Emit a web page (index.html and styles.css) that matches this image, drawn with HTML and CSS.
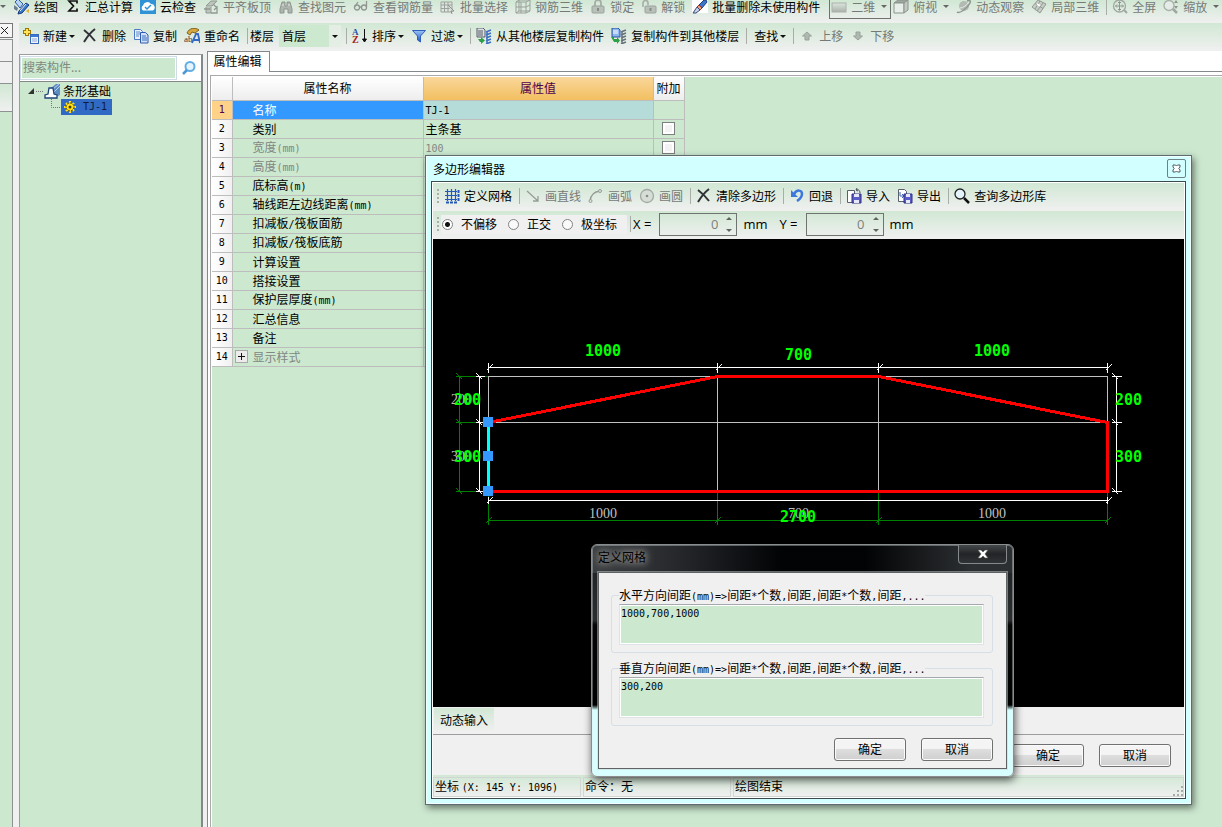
FILE: index.html
```html
<!DOCTYPE html>
<html lang="zh-CN">
<head>
<meta charset="utf-8">
<title>多边形编辑器</title>
<link rel="stylesheet" href="styles.css">
</head>
<body>
<svg class="defs" aria-hidden="true">
  <defs>
    <linearGradient id="gBlue" x1="0" y1="0" x2="0" y2="1"><stop offset="0" stop-color="#9cc4f5"/><stop offset="1" stop-color="#1f55c4"/></linearGradient>
    <linearGradient id="gGray" x1="0" y1="0" x2="0" y2="1"><stop offset="0" stop-color="#dde6de"/><stop offset="1" stop-color="#a9b1aa"/></linearGradient>
  </defs>
  <symbol id="draw" viewBox="0 0 16 16"><path d="M1 3l3-3 5 5-3 4z" fill="#b9d3f2" stroke="#2a5aa8"/><path d="M5 12l7-8 3 2-7 8-4 1z" fill="#3c78d0" stroke="#143a78"/><path d="M6 12l6-7" stroke="#e8f2ff"/><path d="M0 6l4 3-1 3-3-2z" fill="#6b7d95"/><path d="M12 12l3-2v4z" fill="#e0b030"/></symbol>
  <symbol id="sigma" viewBox="0 0 16 16"><path d="M12 4.500V2H4l4.500 5L4 12h8V9.500" fill="none" stroke="#111" stroke-width="1.700"/></symbol>
  <symbol id="cloud" viewBox="0 0 16 16"><rect width="16" height="15" fill="#2f93d6"/><path d="M3 11.500a3 3 0 0 1 0-5A4.500 4.500 0 0 1 11 5a3.500 3.500 0 0 1 2 6.500z" fill="#fff"/><path d="M5 8l2 2 4-4" fill="none" stroke="#2f93d6" stroke-width="1.500"/></symbol>
  <symbol id="align" viewBox="0 0 16 16"><path d="M3 7l5-5h6l-5 5zM3 8v6h5V8" fill="#bcc4bd" stroke="#909891"/><path d="M8 14h6V8l-3 3M1 10h6M10 5l4 4" fill="none" stroke="#909891" stroke-width="1.300"/></symbol>
  <symbol id="binoc" viewBox="0 0 16 16"><path d="M4 3h3v4h2V3h3l2 7v4h-4v-4H6v4H2v-4z" fill="#aeb5af" stroke="#8e958f"/><path d="M4 6h2M10 6h2" stroke="#e5eae6"/></symbol>
  <symbol id="glasses" viewBox="0 0 16 16"><g fill="none" stroke="#8f9690" stroke-width="1.300"><circle cx="4" cy="8.500" r="2.500"/><circle cx="11" cy="8.500" r="2.500"/><path d="M6.500 8h2M1.500 8L5 3M13.500 8V2"/></g></symbol>
  <symbol id="batch" viewBox="0 0 16 16"><path d="M1 3h11v10H1zM1 6h11M1 9.500h11M4.500 3v10M8 3v10" fill="#dfe6e0" stroke="#9ba29c"/><path d="M8 6l6 6-3 0 1 3" fill="#d5dcd6" stroke="#8c938d"/></symbol>
  <symbol id="grid3d" viewBox="0 0 16 16"><path d="M1 3h10v11H1zM4 1h11v11M11 3l4-2M11 14l4-2M1 3l3-2v11l-3 2M4 12h11M1 8h10l4-2M6 3v11" fill="none" stroke="#9aa19b"/></symbol>
  <symbol id="lock" viewBox="0 0 16 16"><path d="M5 7V4a3 3 0 0 1 6 0v3" fill="none" stroke="#a6ada7" stroke-width="1.800"/><rect x="2" y="7" width="12" height="7" rx="1" fill="#b9c0ba" stroke="#9aa19b"/><path d="M8 9v3" stroke="#858c86" stroke-width="2"/></symbol>
  <symbol id="unlock" viewBox="0 0 16 16"><path d="M2 8V4a2.500 2.500 0 0 1 5 0v2" fill="none" stroke="#a6ada7" stroke-width="1.600"/><rect x="4" y="7" width="11" height="7" rx="1" fill="#b9c0ba" stroke="#9aa19b"/><path d="M9.500 9v3" stroke="#858c86" stroke-width="2"/></symbol>
  <symbol id="brush" viewBox="0 0 16 16"><rect width="16" height="14" fill="#fff"/><path d="M7 6l5-5h2l1 2-5 6z" fill="#3c75c8" stroke="#1c3f85"/><path d="M7 6l3 3-2 2-3-3z" fill="#f0a080" stroke="#a03020"/><path d="M5 8l3 3-4 3H1z" fill="#c8d4e8" stroke="#384a78"/></symbol>
  <symbol id="flat" viewBox="0 0 16 16"><rect x="1" y="4" width="14" height="9" fill="url(#gGray)" stroke="#aab1ab"/></symbol>
  <symbol id="cube" viewBox="0 0 16 16"><path d="M1 4l4-3h10l-4 3z" fill="#a0a7a1" stroke="#8c938d"/><path d="M1 4h10v10H1z" fill="#e8eee9" stroke="#8c938d"/><path d="M11 4l4-3v10l-4 3z" fill="#c2c9c3" stroke="#8c938d"/></symbol>
  <symbol id="orbit" viewBox="0 0 16 16"><circle cx="8" cy="7" r="5" fill="#b3bab4"/><path d="M1 13c2 2 10-3 13-9 1-3-1-3-3-2" fill="none" stroke="#8d948e" stroke-width="1.500"/><path d="M4 9c3 0 7-3 8-5" stroke="#e4e9e5" fill="none"/></symbol>
  <symbol id="part3d" viewBox="0 0 16 16"><path d="M1 8l6-7 8 4-6 9z" fill="#c7cec8" stroke="#929993"/><path d="M4 4.500l8 5M9 2L4 10M12 4l-6 8" stroke="#929993"/><path d="M6 5l3 2" stroke="#fff" stroke-width="2"/></symbol>
  <symbol id="full" viewBox="0 0 16 16"><circle cx="7.500" cy="7" r="6" fill="none" stroke="#a0a7a1" stroke-width="1.300"/><path d="M7.500 3v8M3.500 7h8M6 4l1.500-1.500L9 4M6 10l1.500 1.500L9 10M5 5.500L3.500 7 5 8.500M10 5.500L11.500 7 10 8.500" fill="none" stroke="#8f9690"/><path d="M12 11l3 3" stroke="#a0a7a1" stroke-width="2"/></symbol>
  <symbol id="zoomic" viewBox="0 0 16 16"><circle cx="6" cy="6.500" r="5" fill="#e5ebe6" stroke="#a8afa9" stroke-width="1.300"/><path d="M10 10l4 4" stroke="#a0a7a1" stroke-width="2.500"/><path d="M13 1l2 3h-4zM13 10l2-3h-4z" fill="#8f9690"/></symbol>
  <symbol id="new" viewBox="0 0 16 16"><path d="M4 0v8M0 4h8" stroke="#a07800" stroke-width="4"/><path d="M4 1v6M1 4h6" stroke="#ffe45c" stroke-width="2"/><rect x="7.500" y="6.500" width="8" height="9" fill="#eef4fd" stroke="#3a68b8"/><path d="M8 8h7" stroke="#3a78d8" stroke-width="2"/><path d="M9 11h5M9 13h5" stroke="#8aa8d8"/></symbol>
  <symbol id="del" viewBox="0 0 16 16"><path d="M2 2c4 3 8 7 11 11M13 1C9 4 5 9 2 14" fill="none" stroke="#303238" stroke-width="2"/></symbol>
  <symbol id="copy" viewBox="0 0 16 16"><path d="M1.500 1.500h6l2 2v8h-8z" fill="#e8f1fd" stroke="#4d7ac4"/><path d="M3 4h4M3 6h4M3 8h3" stroke="#5d88cc"/><path d="M7.500 4.500h5l2.500 2.500v8H7.500z" fill="#cfe0f8" stroke="#2d5bb0"/><path d="M9 8h4M9 10h5M9 12h5" stroke="#3d6cc0"/></symbol>
  <symbol id="rename" viewBox="0 0 16 16"><path d="M3 5c2-5 8-6 12-3l-4 3-3-1-2 3z" fill="#d8a840" stroke="#80601c"/><text x="0" y="14" class="ic-a">ab</text><path d="M8 15l4-9h2l2 9M10 12h5" fill="none" stroke="#3567c4" stroke-width="1.800"/></symbol>
  <symbol id="sort" viewBox="0 0 16 16"><text x="0" y="7" class="ic-az">A</text><text x="0" y="15" class="ic-z">Z</text><path d="M12.500 1v12M10.500 11l2 3 2-3z" fill="#111" stroke="#111"/></symbol>
  <symbol id="filter" viewBox="0 0 16 16"><path d="M1.500 2.500h13L9.500 8v6l-3-2V8z" fill="url(#gBlue)" stroke="#2f5dbd"/></symbol>
  <symbol id="fromfl" viewBox="0 0 16 16"><path d="M1 0h6l2 2v7H1z" fill="#dde0e4" stroke="#555c66"/><path d="M2 3h5M2 5h5M2 7h5" stroke="#555c66"/><path d="M10 4l5-2M10 7l5-2M10 10l5-2M10 13l5-2M10 16l5-2M11 3v12" stroke="#3b6fc0" stroke-width="1.500" fill="none"/><path d="M2 11h3V9l4 3.500L5 16v-2H4z" fill="#2fa04a"/></symbol>
  <symbol id="tofl" viewBox="0 0 16 16"><path d="M1 0h6l2 2v7H1z" fill="#8fb6ee" stroke="#2450a0"/><path d="M2 3h5M2 5h5" stroke="#fff"/><path d="M10 4l5-2M10 7l5-2M10 10l5-2M10 13l5-2M10 16l5-2M11 3v12" stroke="#66717c" stroke-width="1.500" fill="none"/><path d="M0 9h3v2h3V9l3 3.500L6 16v-2H3z" fill="#2fa04a"/></symbol>
  <symbol id="up" viewBox="0 0 16 16"><path d="M8 4l4.500 4H10v4H6V8H3.500z" fill="#aeb8b0" stroke="#98a29a"/></symbol>
  <symbol id="down" viewBox="0 0 16 16"><path d="M8 12L3.500 8H6V4h4v4h2.500z" fill="#aeb8b0" stroke="#98a29a"/></symbol>
  <symbol id="search" viewBox="0 0 16 16"><circle cx="9" cy="6.500" r="4.500" fill="#e6f4fe" stroke="#62aee4" stroke-width="2"/><path d="M6 10l-4 4" stroke="#4a98d8" stroke-width="2.500"/></symbol>
  <symbol id="strip" viewBox="0 0 16 16"><path d="M7 5l5-4h4v11l-4 2z" fill="#5d8cc4"/><path d="M9 6l6-5M10 9l6-6" stroke="#b4d0ee"/><path d="M1 15v-3l3-1 1-6h4l1 6 3 1v3z" fill="#fff" stroke="#1c4378" stroke-width="1.300"/></symbol>
  <symbol id="gear" viewBox="0 0 16 16"><path d="M8 2v12M2 8h12M4 4l8 8M12 4l-8 8" stroke="#ffe01a" stroke-width="2.200"/><circle cx="8" cy="8" r="4" fill="#ffe01a" stroke="#4a3c00" stroke-dasharray="2 1"/><circle cx="8" cy="8" r="1.500" fill="#4a3c00"/></symbol>
  <symbol id="mesh" viewBox="0 0 16 16"><path d="M3.500 1v12M7.500 1v12M11.500 1v12M1 3.500h12M1 7.500h12M1 11.500h12" stroke="#2458b8" stroke-width="1.200"/><path d="M2 14.500h11M14.500 2v11" stroke="#2458b8" stroke-width="2" stroke-dasharray="3 1"/></symbol>
  <symbol id="line" viewBox="0 0 16 16"><path d="M2 3l11 10M13 8v5H8" fill="none" stroke="#969d97" stroke-width="1.300"/></symbol>
  <symbol id="arc" viewBox="0 0 16 16"><path d="M2 13Q3 4 12 3" fill="none" stroke="#969d97" stroke-width="1.300"/><circle cx="2.500" cy="13" r="1.500" fill="#dfe6e0" stroke="#969d97"/><circle cx="12" cy="3" r="1.500" fill="#dfe6e0" stroke="#969d97"/></symbol>
  <symbol id="circle" viewBox="0 0 16 16"><circle cx="8" cy="8" r="6.500" fill="#d5ddd6" stroke="#a2a9a3" stroke-width="1.300"/><circle cx="8" cy="8" r="1.300" fill="#858c86"/></symbol>
  <symbol id="undo" viewBox="0 0 16 16"><path d="M5 6c3-5 8-4 8 0 0 3-2 5-5 7" fill="none" stroke="#3d78dc" stroke-width="2.500"/><path d="M2 2v7h7z" fill="#3d78dc"/></symbol>
  <symbol id="import" viewBox="0 0 16 16"><path d="M1.500 2.500h7v12h-7z" fill="#fff" stroke="#56606e"/><path d="M6 6h9v9H6z" fill="#5a5cc8" stroke="#2c2e80"/><path d="M8 6h5v3H8zM8 12h5v3H8z" fill="#e8e8fa"/><path d="M14 5c0-3-2-4-4-3l1-2M10 2l2 1" fill="none" stroke="#4a505c"/></symbol>
  <symbol id="export" viewBox="0 0 16 16"><path d="M1.500 1.500h6l2 2v10h-8z" fill="#fff" stroke="#56606e"/><path d="M3 4v4h4M5 6l2 2-2 2" fill="none" stroke="#3c62b0"/><path d="M7 6h8v9H7z" fill="#5a5cc8" stroke="#2c2e80"/><path d="M9 6h4v3H9zM9 12h4v3H9z" fill="#e8e8fa"/></symbol>
  <symbol id="query" viewBox="0 0 16 16"><circle cx="6" cy="6" r="5" fill="#e4f3fc" stroke="#222" stroke-width="1.300"/><path d="M10 10l5 5" stroke="#111" stroke-width="2.500"/></symbol>
</svg>

<div class="app">
  <div class="bar bar-top">
    <span class="caret gray"></span>
    <button class="tb first"><svg class="ic"><use href="#draw"/></svg>绘图</button>
    <button class="tb"><svg class="ic"><use href="#sigma"/></svg>汇总计算</button>
    <button class="tb"><svg class="ic"><use href="#cloud"/></svg>云检查</button>
    <button class="tb off"><svg class="ic"><use href="#align"/></svg>平齐板顶</button>
    <button class="tb off"><svg class="ic"><use href="#binoc"/></svg>查找图元</button>
    <button class="tb off"><svg class="ic"><use href="#glasses"/></svg>查看钢筋量</button>
    <button class="tb off"><svg class="ic"><use href="#batch"/></svg>批量选择</button>
    <button class="tb off"><svg class="ic"><use href="#grid3d"/></svg>钢筋三维</button>
    <button class="tb off"><svg class="ic"><use href="#lock"/></svg>锁定</button>
    <button class="tb off"><svg class="ic"><use href="#unlock"/></svg>解锁</button>
    <button class="tb"><svg class="ic"><use href="#brush"/></svg>批量删除未使用构件</button>
    <button class="tb off boxed"><svg class="ic"><use href="#flat"/></svg>二维<span class="caret gray"></span></button>
    <button class="tb off"><svg class="ic"><use href="#cube"/></svg>俯视<span class="caret gray"></span></button>
    <button class="tb off"><svg class="ic"><use href="#orbit"/></svg>动态观察</button>
    <button class="tb off"><svg class="ic"><use href="#part3d"/></svg>局部三维</button>
    <span class="sep"></span>
    <button class="tb off"><svg class="ic"><use href="#full"/></svg>全屏</button>
    <button class="tb off"><svg class="ic"><use href="#zoomic"/></svg>缩放<span class="caret gray"></span></button>
  </div>

  <div class="body">
    <div class="rail">
      <button class="rail-x" aria-label="关闭"><svg viewBox="0 0 9 9"><path d="M1 1l7 7M8 1l-7 7" stroke="#222"/></svg></button>
      <div class="rail-cell"></div>
      <div class="rail-cell"></div>
      <div class="rail-cell tint"></div>
      <div class="rail-fill"></div>
    </div>
    <div class="main">
      <div class="bar bar-second">
        <button class="tb"><svg class="ic"><use href="#new"/></svg>新建<span class="caret near"></span></button>
        <button class="tb"><svg class="ic"><use href="#del"/></svg>删除</button>
        <button class="tb"><svg class="ic"><use href="#copy"/></svg>复制</button>
        <button class="tb"><svg class="ic"><use href="#rename"/></svg>重命名</button>
        <span class="sep tight"></span>
        <label class="floor-label" for="floor">楼层</label>
        <span class="combo"><select id="floor"><option>首层</option></select><span class="combo-btn"><span class="caret"></span></span></span>
        <span class="sep"></span>
        <button class="tb"><svg class="ic"><use href="#sort"/></svg>排序<span class="caret near"></span></button>
        <button class="tb"><svg class="ic"><use href="#filter"/></svg>过滤<span class="caret near"></span></button>
        <span class="sep"></span>
        <button class="tb"><svg class="ic"><use href="#fromfl"/></svg>从其他楼层复制构件</button>
        <button class="tb"><svg class="ic"><use href="#tofl"/></svg>复制构件到其他楼层</button>
        <span class="sep"></span>
        <button class="tb plain">查找<span class="caret near"></span></button>
        <span class="sep"></span>
        <button class="tb off"><svg class="ic"><use href="#up"/></svg>上移</button>
        <button class="tb off"><svg class="ic"><use href="#down"/></svg>下移</button>
      </div>

      <div class="panes">
        <div class="left">
          <div class="search">
            <input type="text" placeholder="搜索构件..." aria-label="搜索构件">
            <button aria-label="搜索"><svg class="ic"><use href="#search"/></svg></button>
          </div>
          <div class="tree">
            <div class="node"><svg class="twist" viewBox="0 0 20 14"><path d="M10 4v6H4z" fill="#333"/><path d="M12 7.500h8" stroke="#777" stroke-dasharray="1 1"/></svg><svg class="ic"><use href="#strip"/></svg><span class="node-name">条形基础</span></div>
            <div class="node child"><svg class="elbow" viewBox="0 0 10 16"><path d="M.5 0v8.500H10" fill="none" stroke="#777" stroke-dasharray="1 1"/></svg><span class="picked"><svg class="ic"><use href="#gear"/></svg><span class="lat">TJ-1</span></span></div>
          </div>
        </div>

        <div class="right">
          <div class="tabs"><button class="tab">属性编辑</button><span class="tabline"></span></div>
          <div class="sheet">
            <table>
              <colgroup><col class="c-no"><col class="c-name"><col class="c-val"><col class="c-add"></colgroup>
              <thead><tr><th></th><th>属性名称</th><th class="hot">属性值</th><th>附加</th></tr></thead>
              <tbody>
                <tr class="sel"><th>1</th><td>名称</td><td><span class="lat">TJ-1</span></td><td></td></tr>
                <tr><th>2</th><td>类别</td><td>主条基</td><td class="chk"><input type="checkbox" aria-label="附加 类别"></td></tr>
                <tr class="dim"><th>3</th><td>宽度<span class="lat">(mm)</span></td><td><span class="lat">100</span></td><td class="chk"><input type="checkbox" aria-label="附加 宽度"></td></tr>
                <tr class="dim"><th>4</th><td>高度<span class="lat">(mm)</span></td><td></td><td></td></tr>
                <tr><th>5</th><td>底标高<span class="lat">(m)</span></td><td></td><td></td></tr>
                <tr><th>6</th><td>轴线距左边线距离<span class="lat">(mm)</span></td><td></td><td></td></tr>
                <tr><th>7</th><td>扣减板<span class="lat">/</span>筏板面筋</td><td></td><td></td></tr>
                <tr><th>8</th><td>扣减板<span class="lat">/</span>筏板底筋</td><td></td><td></td></tr>
                <tr><th>9</th><td>计算设置</td><td></td><td></td></tr>
                <tr><th>10</th><td>搭接设置</td><td></td><td></td></tr>
                <tr><th>11</th><td>保护层厚度<span class="lat">(mm)</span></td><td></td><td></td></tr>
                <tr><th>12</th><td>汇总信息</td><td></td><td></td></tr>
                <tr><th>13</th><td>备注</td><td></td><td></td></tr>
                <tr class="dim"><th>14</th><td class="exp"><button class="plus" aria-label="展开"><svg viewBox="0 0 9 9"><path d="M4.500 1v7M1 4.500h7" stroke="#111"/></svg></button>显示样式</td><td></td><td></td></tr>
              </tbody>
            </table>
          </div>
        </div>
      </div>
    </div>
  </div>

  <section class="win" aria-label="多边形编辑器">
    <header class="win-title"><span>多边形编辑器</span><button class="win-x" aria-label="关闭"><svg viewBox="0 0 9 9"><path d="M1 1h2.500l1 1 1-1H8v2l-1.200 1.500L8 6v2H5.500l-1-1-1 1H1V6l1.200-1.500L1 3z" fill="#fff" stroke="#4a5a60"/></svg></button></header>
    <div class="client">
      <div class="bar strip">
        <span class="grip"></span>
        <button class="tb"><svg class="ic"><use href="#mesh"/></svg>定义网格</button>
        <span class="sep"></span>
        <button class="tb off"><svg class="ic"><use href="#line"/></svg>画直线</button>
        <button class="tb off"><svg class="ic"><use href="#arc"/></svg>画弧</button>
        <button class="tb off"><svg class="ic"><use href="#circle"/></svg>画圆</button>
        <span class="sep"></span>
        <button class="tb"><svg class="ic"><use href="#del"/></svg>清除多边形</button>
        <span class="sep"></span>
        <button class="tb"><svg class="ic"><use href="#undo"/></svg>回退</button>
        <span class="sep"></span>
        <button class="tb"><svg class="ic"><use href="#import"/></svg>导入</button>
        <button class="tb"><svg class="ic"><use href="#export"/></svg>导出</button>
        <span class="sep"></span>
        <button class="tb"><svg class="ic"><use href="#query"/></svg>查询多边形库</button>
      </div>
      <div class="bar strip">
        <span class="grip"></span>
        <div class="modes">
          <label><input type="radio" name="mode" checked>不偏移</label>
          <label><input type="radio" name="mode">正交</label>
          <label><input type="radio" name="mode">极坐标</label>
        </div>
        <span class="sep tight"></span>
        <label class="axis" for="dx">X =</label>
        <span class="spin"><input id="dx" type="text" value="0" disabled><span class="spin-btns"><button class="su" aria-label="增加 X"></button><button class="sd" aria-label="减少 X"></button></span></span>
        <span class="axis unit">mm</span>
        <label class="axis" for="dy">Y =</label>
        <span class="spin"><input id="dy" type="text" value="0" disabled><span class="spin-btns"><button class="su" aria-label="增加 Y"></button><button class="sd" aria-label="减少 Y"></button></span></span>
        <span class="axis unit">mm</span>
      </div>
      <div class="canvas">
        <svg viewBox="433 239 751 468" preserveAspectRatio="xMidYMid meet" role="img" aria-label="条形基础截面">
          <g transform="translate(.5 .5)" fill="none">
            <g stroke="#008000">
              <path d="M459 376v115M455 376h33M455 422h20M455 491h20M488 520h619M488 491v33M717 491v33M878 491v33M1107 491v33"/>
              <path d="M456 373l6 6M456 419l6 6M456 488l6 6M485 523l6-6M714 523l6-6M875 523l6-6M1104 523l6-6"/>
            </g>
            <path d="M488 376h619v115H488zM488 422h619M717 376v115M878 376v115" stroke="#c0c0c0"/>
            <g stroke="#fff">
              <path d="M488 367h619M488 362v10M717 362v10M878 362v10M1107 362v10M479 376v115M475 376h9M475 422h9M475 491h9M488 500h619M488 496v7M1107 496v7M1116 376v115M1111 376h10M1111 422h10M1111 491h10"/>
              <path d="M486 370l6-6M715 370l6-6M876 370l6-6M1105 370l6-6M476 373l6 6M476 419l6 6M476 488l6 6M486 503l6-6M1105 503l6-6M1112 373l6 6M1112 419l6 6M1112 488l6 6"/>
            </g>
            <path d="M488 422L717 376H878L1107 422V491H488" stroke="#f00" stroke-width="3"/>
            <path d="M488 422v69" stroke="#0ff" stroke-width="3"/>
          </g>
          <g class="dim-s"><text x="451" y="404">200</text><text x="451" y="461">300</text><text x="589" y="518">1000</text><text x="788" y="518">700</text><text x="978" y="518">1000</text></g>
          <g class="dim-l"><text x="585" y="356">1000</text><text x="785" y="360">700</text><text x="974" y="356">1000</text><text x="454" y="405">200</text><text x="454" y="462">300</text><text x="1115" y="405">200</text><text x="1115" y="462">300</text><text x="780" y="522">2700</text></g>
          <g fill="#39f"><path d="M483 417h10v10h-10zM483 451h10v10h-10zM483 486h10v10h-10z"/></g>
        </svg>
      </div>
      <div class="dyn"><button>动态输入</button></div>
      <div class="actions"><button class="push">确定</button><button class="push">取消</button></div>
      <footer class="status">
        <span>坐标 <span class="lat">(X: 145 Y: 1096)</span></span>
        <span>命令：无</span>
        <span>绘图结束</span>
        <svg class="sizer" viewBox="0 0 12 12"><path d="M9 1h2v2H9zM5 5h2v2H5zM9 5h2v2H9zM1 9h2v2H1zM5 9h2v2H5zM9 9h2v2H9z" fill="#a8aca8"/></svg>
      </footer>
    </div>
  </section>

  <section class="dlg" aria-label="定义网格">
    <header class="dlg-title"><span>定义网格</span><button class="dlg-x" aria-label="关闭"><svg viewBox="0 0 12 10"><path d="M1 1h3l2 2 2-2h3L8 5l3 4H8L6 7 4 9H1l3-4z" fill="#fff" stroke="#555" stroke-width=".6"/></svg></button></header>
    <div class="dlg-body">
      <fieldset>
        <legend><label for="hs">水平方向间距<span class="lat">(mm)=&gt;</span>间距<span class="lat">*</span>个数<span class="lat">,</span>间距<span class="lat">,</span>间距<span class="lat">*</span>个数<span class="lat">,</span>间距<span class="lat">,...</span></label></legend>
        <textarea id="hs">1000,700,1000</textarea>
      </fieldset>
      <fieldset>
        <legend><label for="vs">垂直方向间距<span class="lat">(mm)=&gt;</span>间距<span class="lat">*</span>个数<span class="lat">,</span>间距<span class="lat">,</span>间距<span class="lat">*</span>个数<span class="lat">,</span>间距<span class="lat">,...</span></label></legend>
        <textarea id="vs">300,200</textarea>
      </fieldset>
      <div class="dlg-actions"><button class="push">确定</button><button class="push">取消</button></div>
    </div>
  </section>
</div>
</body>
</html>
```

FILE: styles.css
```css
* { box-sizing: border-box; }

body {
  margin: 0;
  background: #cce8cf;
  color: #000;
  font: 12px/16px "Noto Sans CJK SC", sans-serif;
}

button, input, select, textarea {
  margin: 0;
  padding: 0;
  border: 0;
  background: none;
  color: inherit;
  font: inherit;
}

.defs { position: absolute; width: 0; height: 0; }
.ic-a { font: 9px "Liberation Serif", serif; fill: #333; }
.ic-az { font: bold 9px "Liberation Serif", serif; fill: #2d4fa8; }
.ic-z { font: bold 10px "Liberation Serif", serif; fill: #a82020; }

.lat { font: 10px/16px "DejaVu Sans Mono", monospace; white-space: pre; }
.ic { width: 16px; height: 16px; flex: none; }

.app {
  position: relative;
  display: flex;
  flex-direction: column;
  min-height: 100vh;
  overflow: hidden;
}

/* Toolbars */
.bar {
  display: flex;
  align-items: center;
  white-space: nowrap;
  background: linear-gradient(#d1e8d4, #f0f0f0);
}
.bar-top { height: 23px; padding-bottom: 10px; }
.bar-second { height: 28px; padding: 0 0 2px 4px; }

.tb {
  display: flex;
  align-items: center;
  flex: none;
  gap: 4px;
  margin-right: 7px;
}
.tb.first { margin-left: 8px; }
.tb.off { color: #767a77; }
.tb.plain { margin-left: 2px; }
.tb.boxed {
  height: 24px;
  margin: 0 2px 0 2px;
  padding: 0 3px 0 1px;
  border: 1px solid #6e726f;
}

.caret {
  width: 0;
  height: 0;
  flex: none;
  border: 3px solid transparent;
  border-top-color: #111;
  border-bottom: 0;
}
.tb .caret { margin-left: 2px; }
.tb .caret.near { margin-left: -2px; }
.caret.gray { border-top-color: #666; }

.sep {
  flex: none;
  width: 1px;
  height: 16px;
  margin-right: 5px;
  background: #a9aca9;
}
.sep.tight { margin-right: 2px; }
.floor-label { margin-right: 5px; }

.combo {
  display: flex;
  width: 62px;
  height: 22px;
  margin-right: 5px;
  background: #cce8cf;
}
.combo select { flex: 1; min-width: 0; padding-left: 3px; appearance: none; }
.combo-btn {
  display: flex;
  align-items: center;
  justify-content: center;
  width: 12px;
  background: #e4eee5;
}

/* Collapsed panel rail */
.body { display: flex; flex: 1; background: #f0f0f0; }
.rail { display: flex; flex-direction: column; width: 13px; margin-right: 6px; }
.rail-x {
  height: 15px;
  margin-bottom: 1px;
  border: 1px solid #777;
  border-left: 0;
  background: #f6f6f6;
}
.rail-x svg { display: block; width: 9px; height: 9px; }
.rail-cell {
  height: 22px;
  border: solid #8e9290;
  border-width: 1px 1px 0 0;
}
.rail-cell.tint { height: 28px; background: linear-gradient(#d1e8d4, #f0f0f0); }
.rail-fill {
  flex: 1;
  border: solid #8e9290;
  border-width: 1px 1px 0 0;
  background: #cce8cf;
}

.main { display: flex; flex: 1; flex-direction: column; min-width: 0; }
.panes { display: flex; flex: 1; }

/* Component tree */
.left {
  display: flex;
  flex-direction: column;
  width: 184px;
  margin-top: 3px;
  margin-right: 4px;
  border: 1px solid #9a9d9b;
  border-right: 2px solid #85888a;
  border-bottom: 0;
}
.search { display: flex; align-items: center; height: 26px; background: #fff; }
.search input {
  width: 157px;
  height: 24px;
  padding: 0 0 4px 2px;
  border: 1px solid #cfdbe6;
  background: #cce8cf;
  box-shadow: inset 0 0 0 1px #fff;
}
.search input::placeholder { color: #7d8a7f; opacity: 1; }
.search button { display: flex; margin-left: 4px; }
.tree {
  flex: 1;
  padding-top: 1px;
  border-top: 1px solid #85888a;
  background: #cce8cf;
}
.node { display: flex; align-items: center; height: 16px; padding-left: 4px; }
.twist { width: 20px; height: 14px; }
.node-name { margin-left: 3px; }
.child { padding-left: 31px; }
.elbow { width: 10px; height: 16px; }
.picked {
  display: flex;
  align-items: center;
  height: 16px;
  gap: 5px;
  padding: 0 5px 0 1px;
  background: #316ac5;
  color: #fff;
}
.picked .lat { color: #0c1c38; }

/* Property sheet */
.right {
  display: flex;
  flex: 1;
  flex-direction: column;
  min-width: 0;
  border-left: 1px solid #85888a;
  background: #fff;
}
.tabs { display: flex; height: 21px; margin-bottom: 3px; }
.tab {
  width: 62px;
  padding: 0 2px 2px 0;
  border: solid #85888a;
  border-width: 1px 1px 0 0;
}
.tabline { flex: 1; border-bottom: 1px solid #85888a; }
.sheet {
  flex: 1;
  margin-left: 2px;
  padding: 1px 0 0 1px;
  border: solid #a9a9ab;
  border-width: 1px 0 0 1px;
  background: #cce8cf;
  background-clip: content-box;
}
table { border-collapse: collapse; table-layout: fixed; width: 472px; }
.c-no { width: 20px; }
.c-name { width: 191px; }
.c-val { width: 230px; }
.c-add { width: 31px; }
th, td {
  height: 19px;
  padding: 0;
  border: solid #bdbdbd;
  border-width: 0 1px 1px 0;
  font-weight: normal;
  line-height: 16px;
  white-space: nowrap;
}
thead th { height: 23px; background: linear-gradient(#fff, #ededee); }
thead th.hot { background: linear-gradient(#f9d69a, #f2bf60); color: #50004c; }
tbody th {
  background: linear-gradient(90deg, #fff, #f0f0f0);
  font: 10px/16px "DejaVu Sans Mono", monospace;
}
td { padding-left: 2px; text-align: left; }
td:nth-child(2) { padding-left: 20px; }
.dim td { color: #828783; }
.sel th { background: #ffd28a; color: #50004c; }
.sel td:nth-child(3) { background: #b5dcd9; }
.sel td:nth-child(2) { background: #39f; color: #fff; }
.chk { padding: 0; }
.chk input {
  display: block;
  width: 13px;
  height: 13px;
  margin: 0 auto;
  appearance: none;
  border: 1px solid #7d807e;
  background: #f3f3f3;
  box-shadow: inset 0 0 0 2px #fff;
}
td.exp:nth-child(2) { padding-left: 2px; }
.plus {
  width: 13px;
  height: 13px;
  margin: 1px 5px 0 0;
  border: 1px solid #a9a9a9;
  background: #ececec;
  vertical-align: top;
}
.plus svg { display: block; width: 9px; height: 9px; margin: 0 auto; }

/* Polygon editor window */
.win {
  position: absolute;
  top: 155px;
  right: 30px;
  bottom: 22px;
  left: 425px;
  display: flex;
  flex-direction: column;
  padding: 0 5px 5px;
  border: 1px solid #5d6c70;
  background: #d2ffff;
  box-shadow: inset 0 0 0 1px #f2ffff, 2px 3px 7px rgba(0, 0, 0, .5);
}
.win-title {
  display: flex;
  align-items: center;
  justify-content: space-between;
  height: 25px;
  padding-left: 2px;
}
.win-x {
  display: flex;
  align-items: center;
  justify-content: center;
  width: 19px;
  height: 19px;
  border: 1px solid #6c8086;
  border-radius: 2px;
}
.win-x svg { width: 9px; height: 9px; }
.client {
  display: flex;
  flex: 1;
  flex-direction: column;
  min-height: 0;
  padding: 1px;
  border: 1px solid #3c494d;
  background: #f0f0f0;
  box-shadow: inset 0 0 0 1px #fff;
}
.strip { height: 28px; padding-bottom: 2px; }
.grip {
  width: 2px;
  height: 14px;
  margin: 0 5px 0 4px;
  background: repeating-linear-gradient(#a9b0aa 0 2px, transparent 2px 4px);
}
.modes {
  display: flex;
  align-items: center;
  height: 19px;
  gap: 11px;
  margin: 0 3px 0 -3px;
  padding-right: 10px;
  background: #f0f0f0;
}
.modes label { display: flex; align-items: center; gap: 8px; }
.modes input {
  width: 11px;
  height: 11px;
  appearance: none;
  border: 1px solid #808381;
  border-radius: 50%;
  background: #fafafa;
}
.modes label:first-child { padding-left: 1px; }
.modes input:checked { background: radial-gradient(circle, #111 0 2px, #fff 3px); }
.axis { font: 13px/16px "Open Sans", sans-serif; margin-right: 8px; }
.axis.unit { margin-left: 6px; margin-right: 12px; }
.spin {
  display: flex;
  align-items: center;
  width: 78px;
  height: 23px;
  border: 1px solid #6f7471;
}
.spin input {
  flex: 1;
  min-width: 0;
  color: #7c817d;
  font: 13px/16px "Open Sans", sans-serif;
  text-align: right;
}
.spin-btns {
  display: flex;
  flex-direction: column;
  justify-content: space-between;
  height: 15px;
  margin: 0 4px 0 8px;
}
.su, .sd { width: 0; height: 0; border: solid transparent; border-width: 3px; }
.su { border-top: 0; border-bottom-color: #60645f; }
.sd { border-bottom: 0; border-top-color: #60645f; }

.canvas { flex: 1; min-height: 0; background: #000; }
.canvas svg { display: block; width: 100%; height: 100%; shape-rendering: crispEdges; }
.dim-s { font: 14px "Liberation Serif", serif; fill: #c0c0c0; }
.dim-l { font: bold 15px "DejaVu Sans Mono", monospace; fill: #0f0; }

.dyn {
  display: flex;
  align-items: flex-start;
  height: 28px;
  padding: 1px;
  border-bottom: 1px solid #9c9e9d;
}
.dyn button {
  height: 24px;
  padding: 0 6px;
  background: linear-gradient(#d1e8d4, #f0f0f0);
}
.actions {
  display: flex;
  justify-content: flex-end;
  gap: 15px;
  height: 40px;
  padding: 9px 13px 0 0;
}
.push {
  width: 72px;
  height: 23px;
  padding-bottom: 2px;
  border: 1px solid #707070;
  border-radius: 3px;
  background: linear-gradient(#f4f4f4 0 45%, #dedede 50%, #cfcfcf);
  box-shadow: inset 0 0 0 1px #fbfbfb;
}
.status {
  display: flex;
  align-items: center;
  gap: 2px;
  height: 22px;
  padding-top: 2px;
  background: linear-gradient(#d1e8d4, #f0f0f0);
}
.status > span { width: 148px; height: 20px; padding: 0 1px; border: 1px solid #d2d6d3; white-space: pre; }
.status > span:nth-child(3) { flex: 1; }
.sizer { width: 12px; height: 12px; margin-left: -14px; align-self: flex-end; }

/* Grid definition dialog */
.dlg {
  position: absolute;
  top: 544px;
  left: 591px;
  width: 423px;
  padding: 0 6px 7px;
  border: 1px solid #8a8d8e;
  border-radius: 6px;
  background:
    linear-gradient(90deg, #3c3f41, #26282b 20%, #020305 45% 65%, #2c2f31 90%) top / 100% 28px no-repeat,
    linear-gradient(#1c1d20 0, #2c2d2f 75px, #050506 80px, #000 160px, #d8ffff 165px);
  box-shadow: inset 0 0 0 1px rgba(230, 240, 240, .35), 1px 3px 8px rgba(0, 0, 0, .65);
}
.dlg-title { display: flex; align-items: flex-start; justify-content: space-between; height: 27px; }
.dlg-title span {
  margin-top: 4px;
  text-shadow: 0 0 6px #a0a0a0, 0 0 8px #909090, 0 0 12px #808080;
}
.dlg-x {
  display: flex;
  align-items: center;
  justify-content: center;
  width: 49px;
  height: 19px;
  border: 1px solid #85898b;
  border-top: 0;
  border-radius: 0 0 4px 4px;
  background: linear-gradient(#45484a, #222426 50%, #303335);
}
.dlg-x svg { width: 12px; height: 10px; }
.dlg-body {
  padding: 14px 13px 7px 12px;
  border: 1px solid #5f6364;
  background: #f0f0f0;
  box-shadow: 0 0 0 1px rgba(200, 210, 210, .5);
}
fieldset {
  min-width: 0;
  height: 66px;
  margin: 0 0 7px;
  padding: 1px 8px 0 7px;
  border: 1px solid #d5dfe5;
  border-radius: 3px;
}
legend { height: 16px; padding: 0; }
legend label { display: block; white-space: nowrap; }
textarea {
  display: block;
  width: 100%;
  height: 41px;
  padding: 1px;
  border: 1px solid #dfe3e8;
  border-top-color: #a5a9ad;
  background: #cce8cf;
  box-shadow: inset 0 0 0 1px #fff;
  font: 10px/16px "DejaVu Sans Mono", monospace;
  resize: none;
}
.dlg-actions { display: flex; justify-content: flex-end; gap: 15px; padding-top: 5px; }
```
